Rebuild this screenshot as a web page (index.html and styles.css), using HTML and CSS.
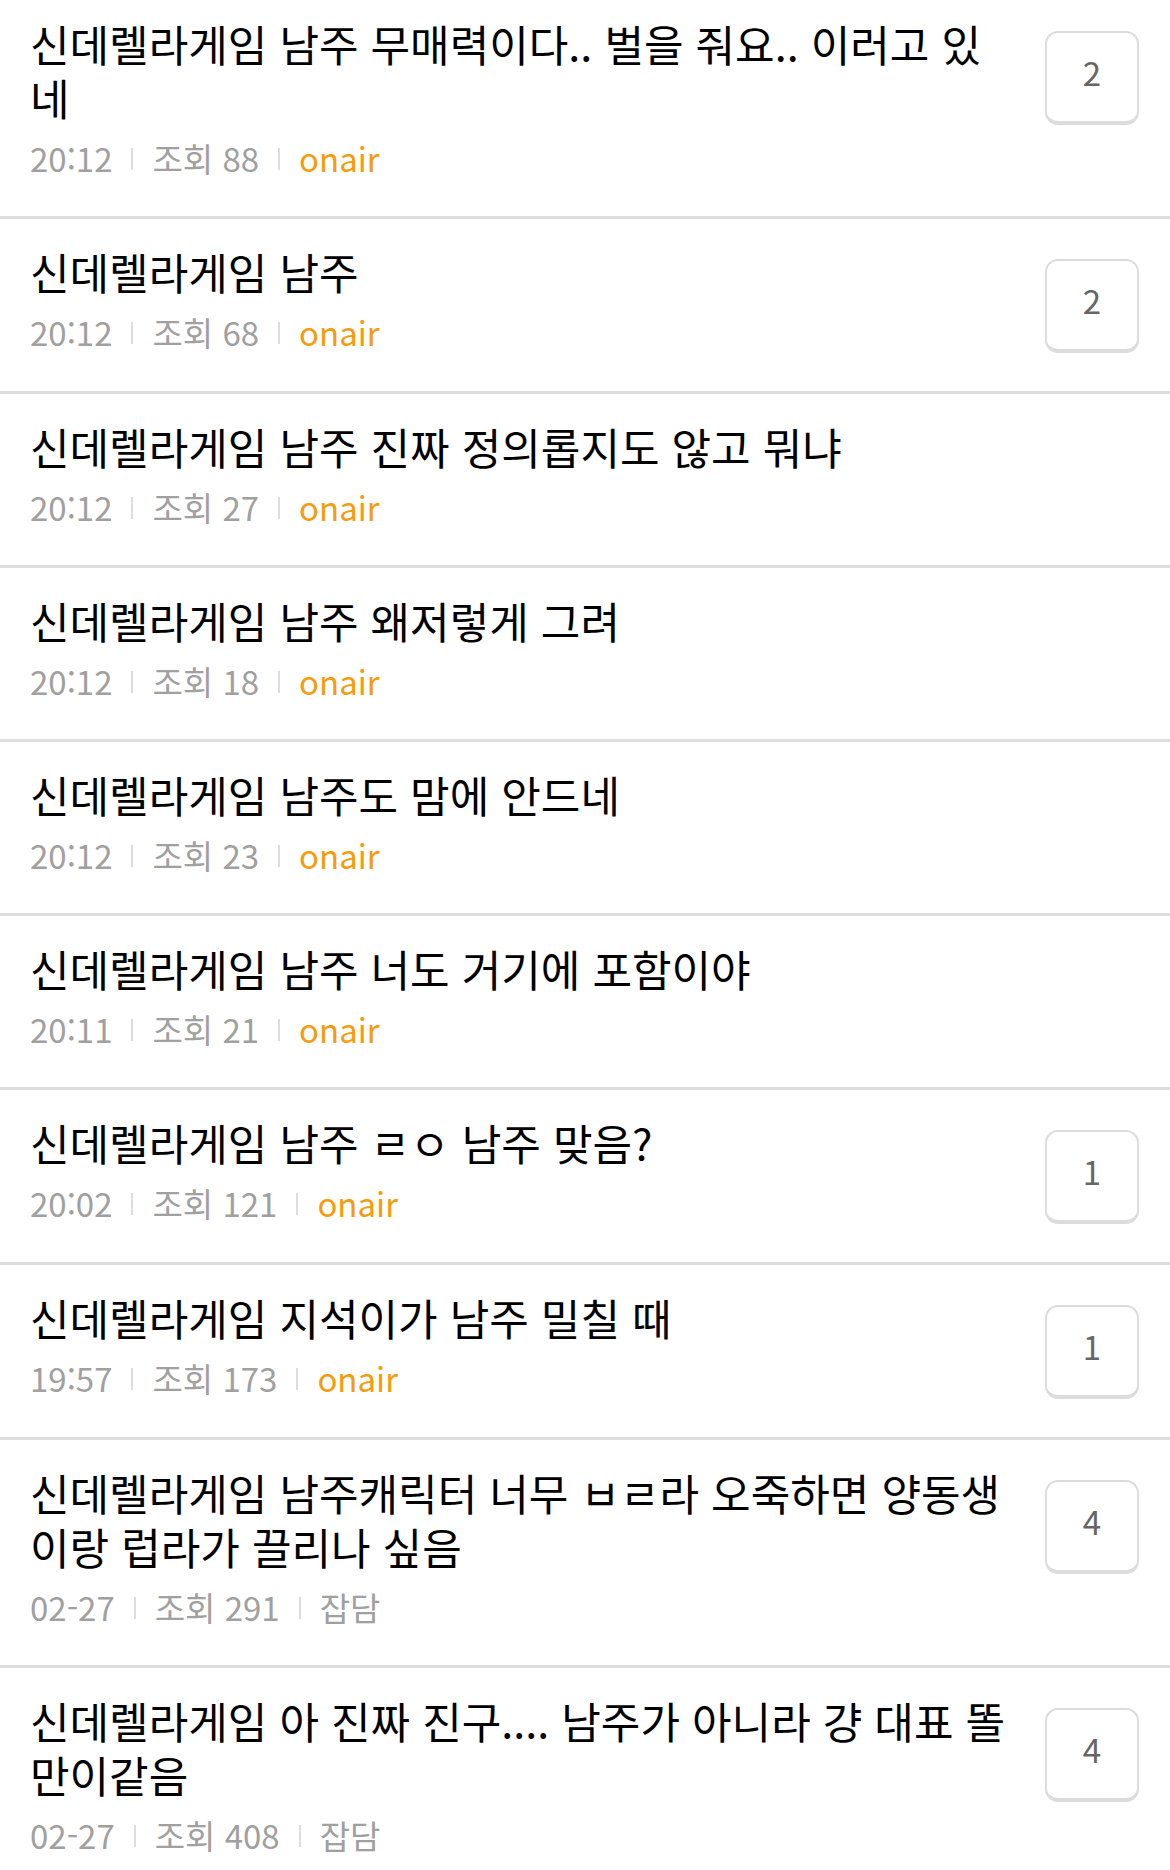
FILE: index.html
```html
<!DOCTYPE html>
<html lang="ko">
<head>
  <meta charset="UTF-8">
  <meta name="viewport" content="width=device-width, initial-scale=1.0">
  <title>신데렐라게임 검색</title>
  <link rel="stylesheet" href="styles.css">
</head>
<body>
  <ul class="post-list">
    <li class="post">
      <div class="post-body">
        <p class="post-title">신데렐라게임 남주 무매력이다.. 벌을 줘요.. 이러고 있네</p>
        <p class="post-meta"><span>20:12</span><i class="sep"></i><span>조회 88</span><i class="sep"></i><span class="board onair">onair</span></p>
      </div>
      <span class="reply-count">2</span>
    </li>
    <li class="post">
      <div class="post-body">
        <p class="post-title">신데렐라게임 남주</p>
        <p class="post-meta"><span>20:12</span><i class="sep"></i><span>조회 68</span><i class="sep"></i><span class="board onair">onair</span></p>
      </div>
      <span class="reply-count">2</span>
    </li>
    <li class="post">
      <div class="post-body">
        <p class="post-title">신데렐라게임 남주 진짜 정의롭지도 않고 뭐냐</p>
        <p class="post-meta"><span>20:12</span><i class="sep"></i><span>조회 27</span><i class="sep"></i><span class="board onair">onair</span></p>
      </div>
    </li>
    <li class="post">
      <div class="post-body">
        <p class="post-title">신데렐라게임 남주 왜저렇게 그려</p>
        <p class="post-meta"><span>20:12</span><i class="sep"></i><span>조회 18</span><i class="sep"></i><span class="board onair">onair</span></p>
      </div>
    </li>
    <li class="post">
      <div class="post-body">
        <p class="post-title">신데렐라게임 남주도 맘에 안드네</p>
        <p class="post-meta"><span>20:12</span><i class="sep"></i><span>조회 23</span><i class="sep"></i><span class="board onair">onair</span></p>
      </div>
    </li>
    <li class="post">
      <div class="post-body">
        <p class="post-title">신데렐라게임 남주 너도 거기에 포함이야</p>
        <p class="post-meta"><span>20:11</span><i class="sep"></i><span>조회 21</span><i class="sep"></i><span class="board onair">onair</span></p>
      </div>
    </li>
    <li class="post">
      <div class="post-body">
        <p class="post-title">신데렐라게임 남주 ㄹㅇ 남주 맞음?</p>
        <p class="post-meta"><span>20:02</span><i class="sep"></i><span>조회 121</span><i class="sep"></i><span class="board onair">onair</span></p>
      </div>
      <span class="reply-count">1</span>
    </li>
    <li class="post">
      <div class="post-body">
        <p class="post-title">신데렐라게임 지석이가 남주 밀칠 때</p>
        <p class="post-meta"><span>19:57</span><i class="sep"></i><span>조회 173</span><i class="sep"></i><span class="board onair">onair</span></p>
      </div>
      <span class="reply-count">1</span>
    </li>
    <li class="post">
      <div class="post-body">
        <p class="post-title">신데렐라게임 남주캐릭터 너무 ㅂㄹ라 오죽하면 양동생이랑 럽라가 끌리나 싶음</p>
        <p class="post-meta"><span>02-27</span><i class="sep"></i><span>조회 291</span><i class="sep"></i><span class="board">잡담</span></p>
      </div>
      <span class="reply-count">4</span>
    </li>
    <li class="post">
      <div class="post-body">
        <p class="post-title">신데렐라게임 아 진짜 진구.... 남주가 아니라 걍 대표 똘만이같음</p>
        <p class="post-meta"><span>02-27</span><i class="sep"></i><span>조회 408</span><i class="sep"></i><span class="board">잡담</span></p>
      </div>
      <span class="reply-count">4</span>
    </li>
  </ul>
</body>
</html>
```

FILE: styles.css
```css
body {
  margin: 0;
  background: #fff;
  font-family: "Noto Sans CJK KR", "Noto Sans", sans-serif;
  color: #000;
  overflow: hidden;
}
.post-list {
  list-style: none;
  margin: -9px 0 0;
  padding: 0;
}
.post {
  display: flex;
  align-items: flex-start;
  gap: 30px;
  padding: 25px 31px 38px 30px;
  border-bottom: 3px solid #dedede;
}
.post-body {
  flex: 1;
  min-width: 0;
}
.post-title {
  margin: 0;
  font-size: 43px;
  line-height: 54px;
  color: #000;
}
.post-meta {
  display: flex;
  align-items: center;
  margin: 14px 0 0;
  font-size: 33px;
  line-height: 40px;
  color: #a0a0a0;
}
.sep {
  display: inline-block;
  width: 2px;
  height: 22px;
  margin: 2px 19px 0;
  background: #dddddd;
}
.onair {
  color: #f59b0c;
}
.reply-count {
  flex: none;
  box-sizing: border-box;
  width: 94px;
  height: 94px;
  margin-top: 15px;
  padding-bottom: 10px;
  border: 2px solid #dcdcdc;
  border-bottom-width: 4px;
  border-radius: 13px;
  display: flex;
  align-items: center;
  justify-content: center;
  font-size: 33px;
  color: #666;
}
```
